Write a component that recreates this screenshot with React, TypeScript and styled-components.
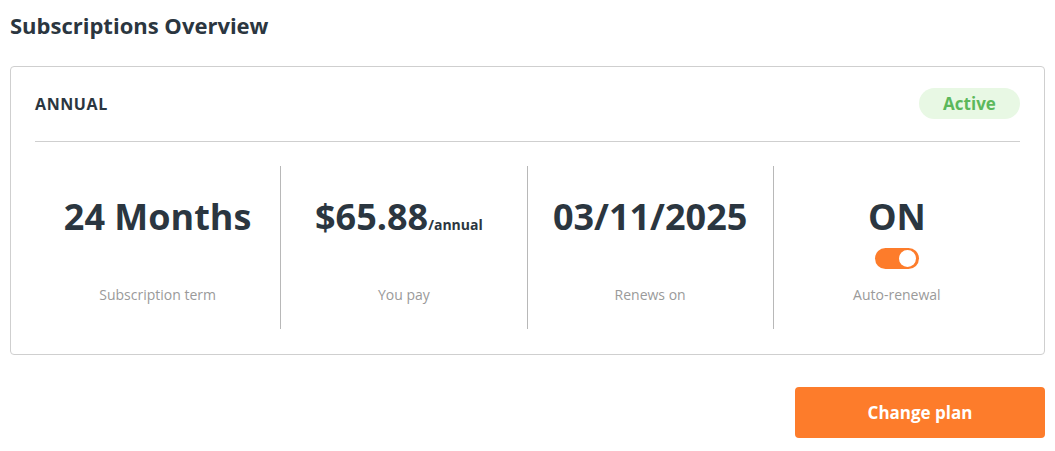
import { styled, createGlobalStyle } from "styled-components";

const GlobalStyle = createGlobalStyle`
  body {
    margin: 0;
    background: #fff;
    font-family: "Open Sans", "Liberation Sans", sans-serif;
    color: #2b3640;
  }
`;

const Page = styled.div`
  padding: 10px 10px 12px;
  display: flex;
  flex-direction: column;
`;

const Title = styled.h1`
  margin: 0 0 26px;
  font-size: 22px;
  line-height: 30px;
  font-weight: 700;
  color: #2b3640;
`;

const Card = styled.section`
  border: 1px solid #cfcfcf;
  border-radius: 4px;
  padding: 21px 24px 25px;
`;

const CardHeader = styled.div`
  display: flex;
  align-items: center;
  justify-content: space-between;
  height: 31px;
  padding-bottom: 22px;
  border-bottom: 1px solid #cfcfcf;
`;

const PlanName = styled.span`
  font-size: 16px;
  font-weight: 700;
  letter-spacing: 0.6px;
  color: #2b3640;
`;

const Badge = styled.span<{ $tone?: "green" | "gray" }>`
  display: inline-flex;
  align-items: center;
  justify-content: center;
  width: 101px;
  height: 31px;
  border-radius: 16px;
  font-size: 17px;
  font-weight: 700;
  background: ${({ $tone }) => ($tone === "gray" ? "#eee" : "#e8f8e4")};
  color: ${({ $tone }) => ($tone === "gray" ? "#888" : "#5cb85c")};
`;

const Stats = styled.div`
  display: grid;
  grid-template-columns: repeat(4, 1fr);
  margin-top: 24px;
`;

const Stat = styled.div`
  display: flex;
  flex-direction: column;
  align-items: center;
  height: 163px;
  padding-top: 27px;
  box-sizing: border-box;
  border-right: 1px solid #b8b8b8;

  &:last-child {
    border-right: none;
  }
`;

const Value = styled.div<{ $shift?: number }>`
  display: flex;
  align-items: baseline;
  height: 48px;
  font-size: 36px;
  line-height: 48px;
  font-weight: 700;
  color: #2b3640;
  white-space: nowrap;
  margin-right: ${({ $shift }) => $shift ?? 0}px;
`;

const Unit = styled.span`
  font-size: 14px;
  line-height: 1;
  font-weight: 700;
`;

const Slot = styled.div`
  height: 28px;
  display: flex;
  align-items: flex-end;
`;

const Label = styled.div`
  margin-top: 16px;
  font-size: 14px;
  line-height: 20px;
  color: #9a9a9a;
`;

const Toggle = styled.button<{ $on: boolean }>`
  position: relative;
  width: 44px;
  height: 21px;
  padding: 0;
  border: none;
  border-radius: 11px;
  cursor: pointer;
  background: ${({ $on }) => ($on ? "#fd7c2b" : "#ccc")};

  &::after {
    content: "";
    position: absolute;
    top: 2px;
    left: ${({ $on }) => ($on ? "24px" : "2px")};
    width: 17px;
    height: 17px;
    border-radius: 50%;
    background: #fff;
  }
`;

const Footer = styled.div`
  display: flex;
  justify-content: flex-end;
  margin-top: 32px;
`;

const PrimaryButton = styled.button`
  width: 250px;
  height: 51px;
  border: none;
  border-radius: 4px;
  background: #fd7c2b;
  color: #fff;
  font-family: inherit;
  font-size: 17px;
  font-weight: 700;
  cursor: pointer;
`;

export default function App() {
  return (
    <>
      <GlobalStyle />
      <Page>
        <Title>Subscriptions Overview</Title>
        <Card>
          <CardHeader>
            <PlanName>ANNUAL</PlanName>
            <Badge $tone="green">Active</Badge>
          </CardHeader>
          <Stats>
            <Stat>
              <Value>24 Months</Value>
              <Slot />
              <Label>Subscription term</Label>
            </Stat>
            <Stat>
              <Value $shift={10}>
                $65.88<Unit>/annual</Unit>
              </Value>
              <Slot />
              <Label>You pay</Label>
            </Stat>
            <Stat>
              <Value>03/11/2025</Value>
              <Slot />
              <Label>Renews on</Label>
            </Stat>
            <Stat>
              <Value>ON</Value>
              <Slot>
                <Toggle $on aria-label="Auto-renewal" />
              </Slot>
              <Label>Auto-renewal</Label>
            </Stat>
          </Stats>
        </Card>
        <Footer>
          <PrimaryButton>Change plan</PrimaryButton>
        </Footer>
      </Page>
    </>
  );
}
